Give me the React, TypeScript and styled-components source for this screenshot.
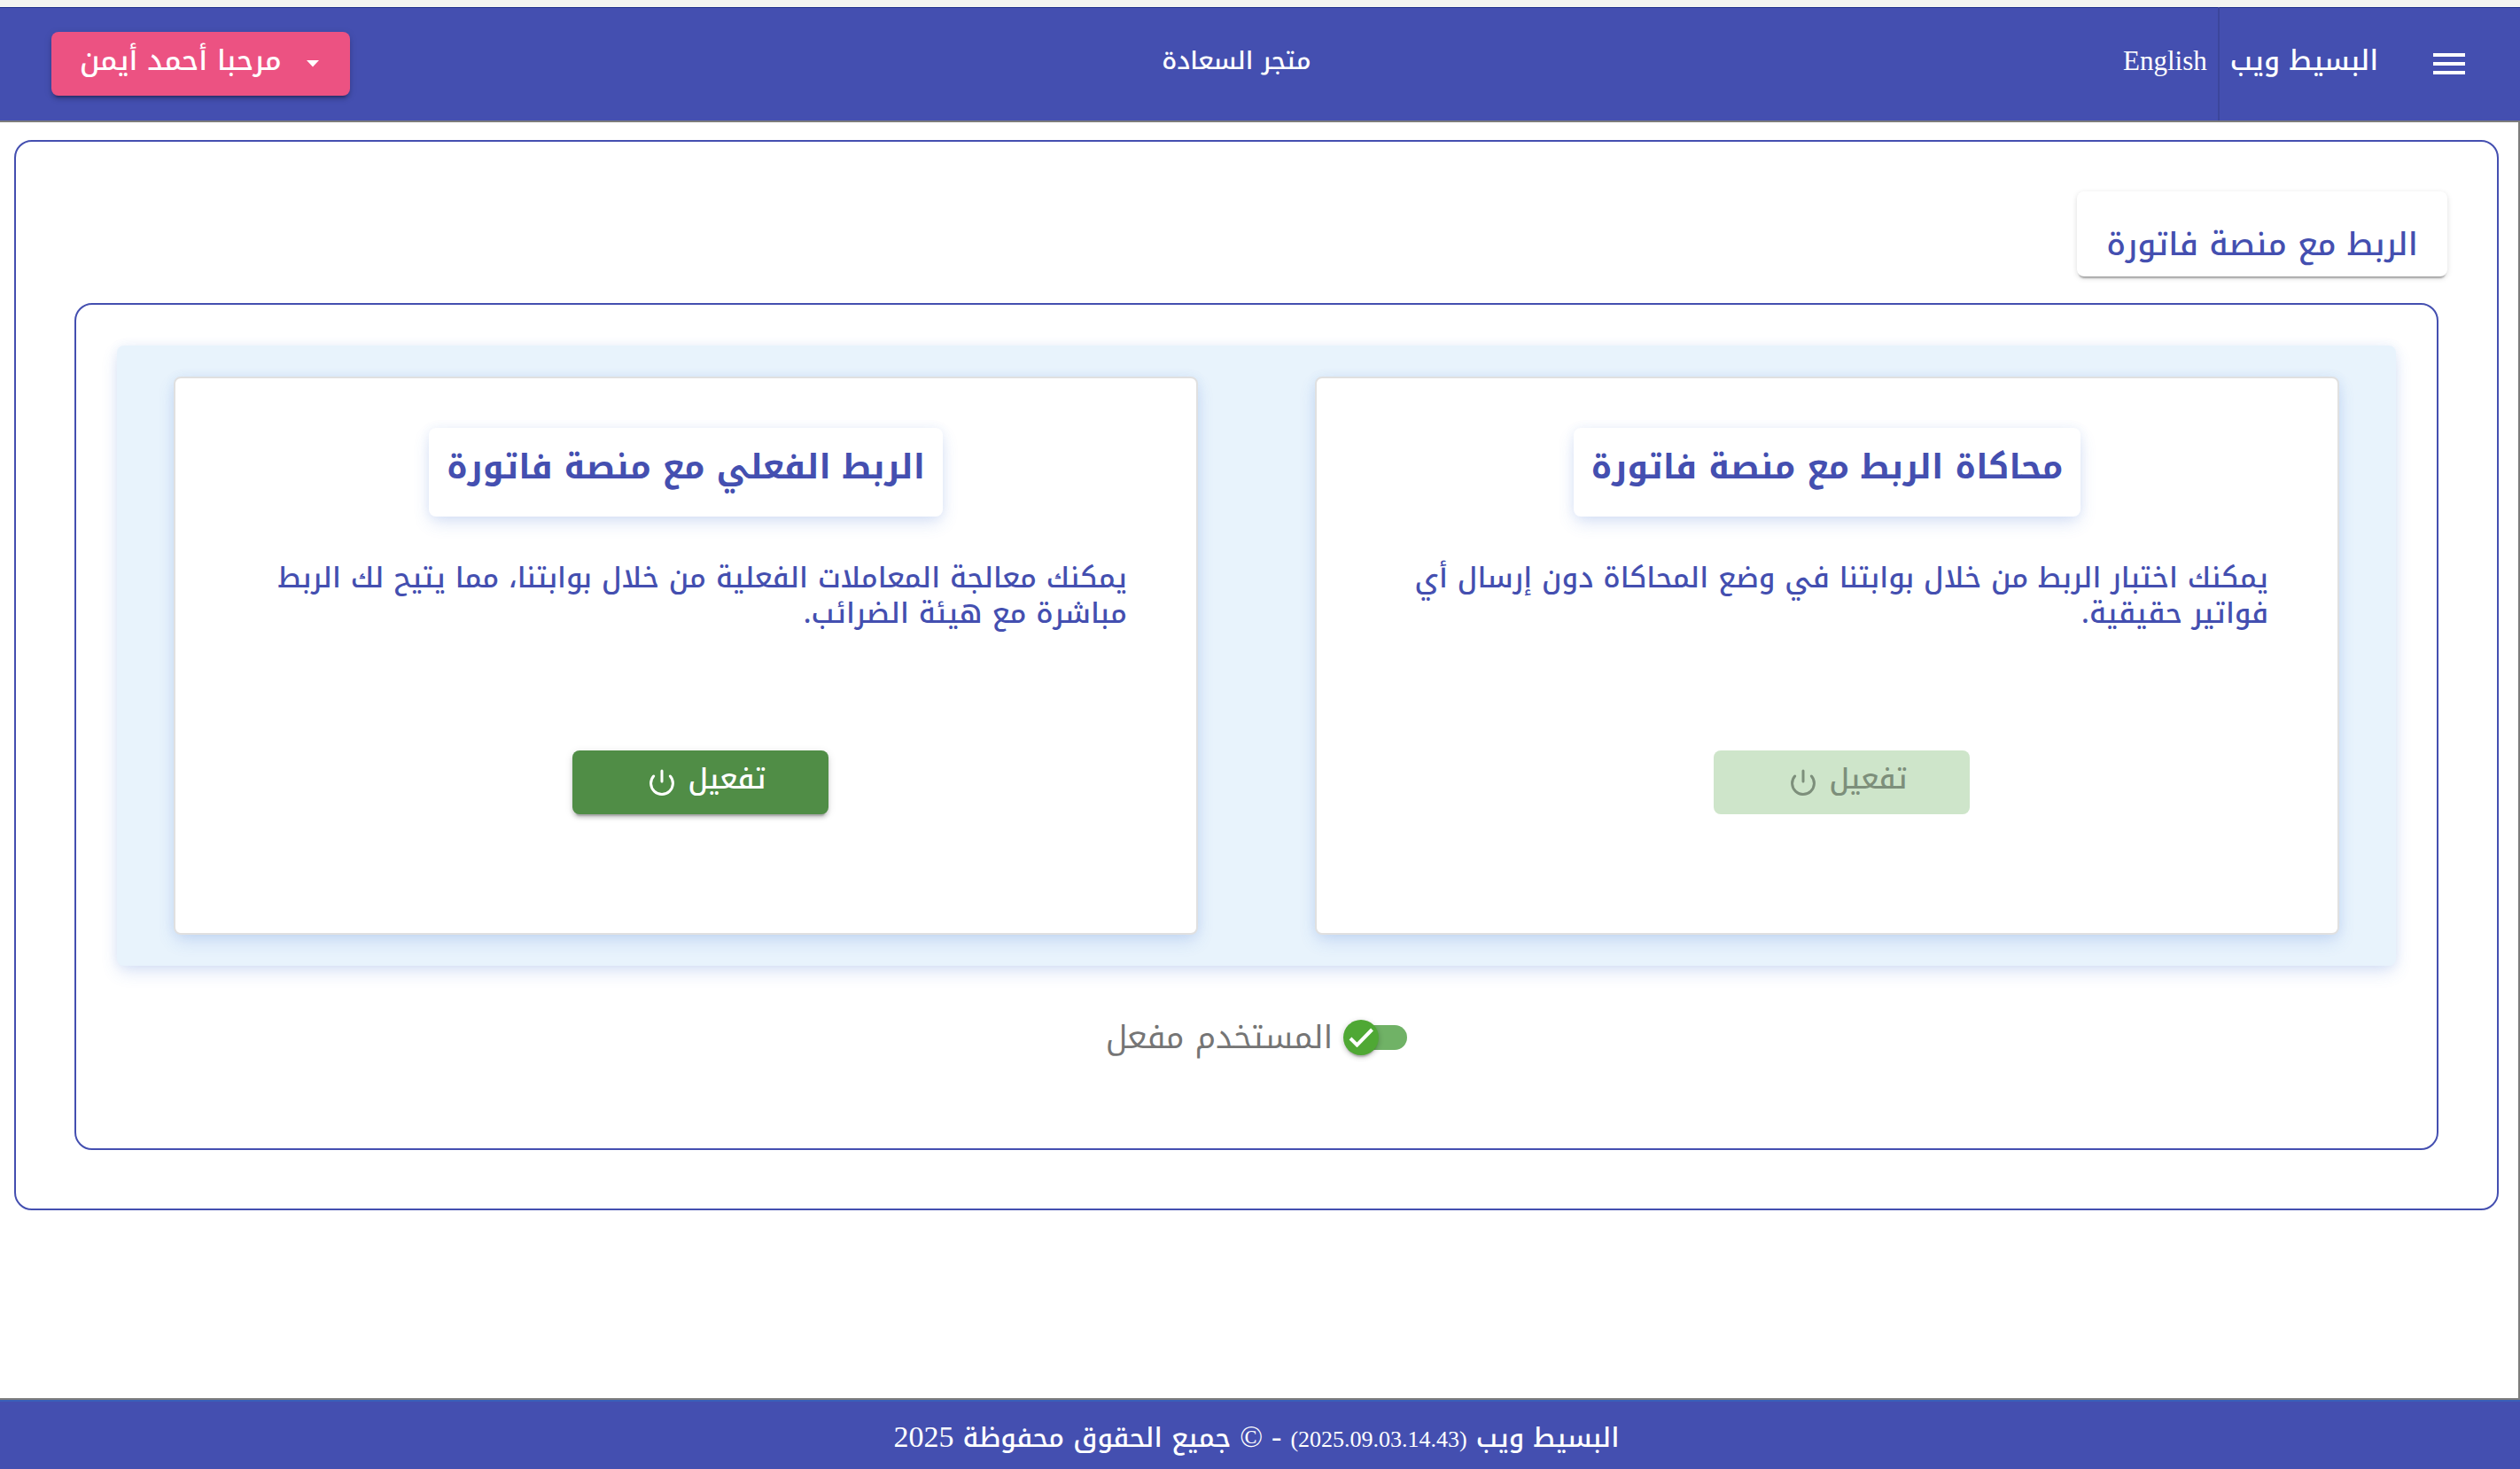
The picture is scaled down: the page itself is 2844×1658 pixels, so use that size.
import React, { useState } from "react";
import styled, { createGlobalStyle, css } from "styled-components";

const color = {
  primary: "#444fb0",
  primaryDark: "#1f2f8c",
  accent: "#ec5282",
  success: "#508d46",
  successPale: "#cee5ca",
  toggle: "#4fa834",
  toggleTrack: "#70b266",
  frame: "#7c7c7c",
  section: "#e8f3fc",
};

const arabic = `"Noto Kufi Arabic", "DejaVu Sans", sans-serif`;
const latin = `"Liberation Serif", serif`;

const GlobalStyle = createGlobalStyle`
  *, *::before, *::after { box-sizing: border-box; }
  body { margin: 0; background: #fff; font-family: ${arabic}; font-weight: 500; }
  button, input { font-family: inherit; font-weight: inherit; }
  h1, h2, p { margin: 0; }
`;

const Page = styled.div`
  display: flex;
  flex-direction: column;
  min-height: 100vh;
  border-top: 8px solid #f3f4f1;
`;

const Header = styled.header`
  display: flex;
  justify-content: space-between;
  align-items: center;
  height: 130px;
  padding: 0 62px 0 58px;
  background: ${color.primary};
  border-bottom: 2px solid ${color.frame};
  box-shadow: inset 0 1px 0 ${color.primaryDark};
  color: #fff;
`;

const BrandGroup = styled.nav`
  display: flex;
  align-self: stretch;
  align-items: center;
`;

const MenuButton = styled.button`
  display: flex;
  flex-direction: column;
  gap: 6px;
  width: 36px;
  margin-left: 62px;
  padding: 0;
  border: 0;
  background: none;
`;

const MenuBar = styled.span`
  height: 4px;
  background: #fff;
`;

const Brand = styled.a`
  display: flex;
  align-items: center;
  align-self: stretch;
  padding: 0 0 6px 12px;
  border-left: 2px solid #3c469c;
  color: inherit;
  font-size: 31px;
  line-height: 40px;
  text-decoration: none;
`;

const LanguageLink = styled.a`
  padding: 0 12px 6px 0;
  color: inherit;
  font-family: ${latin};
  font-size: 31px;
  line-height: 40px;
  text-decoration: none;
`;

const StoreName = styled.span`
  padding-bottom: 6px;
  font-size: 28px;
  line-height: 40px;
`;

const raised = css`
  box-shadow: 0 6px 2px -4px rgba(0, 0, 0, 0.2), 0 4px 4px rgba(0, 0, 0, 0.14),
    0 2px 10px rgba(0, 0, 0, 0.12);
`;

const UserButton = styled.button`
  display: flex;
  align-items: center;
  gap: 28px;
  height: 72px;
  padding: 0 35px 0 32px;
  border: 0;
  border-radius: 8px;
  background: ${color.accent};
  color: #fff;
  font-size: 32px;
  line-height: 40px;
  ${raised}
`;

const UserName = styled.span`
  padding-bottom: 6px;
`;

const Main = styled.main`
  flex: 1;
  padding: 20px 22px 20px 16px;
  border-right: 2px solid ${color.frame};
`;

const OuterPanel = styled.section`
  padding: 56px 56px 66px 66px;
  border: 2px solid ${color.primary};
  border-radius: 20px;
`;

const PageTitle = styled.h1`
  width: fit-content;
  padding: 36px 33px 12px;
  border-radius: 8px;
  color: ${color.primary};
  font-size: 36px;
  font-weight: 500;
  line-height: 48px;
  box-shadow: 0 4px 2px -2px rgba(0, 0, 0, 0.3), 0 2px 6px rgba(0, 0, 0, 0.14);
`;

const InnerPanel = styled.div`
  margin: 30px 10px 0 0;
  padding: 46px;
  border: 2px solid ${color.primary};
  border-radius: 20px;
`;

const glow = css`
  box-shadow: 0 8px 20px -2px rgba(60, 110, 210, 0.2), 0 0 12px rgba(60, 110, 210, 0.08);
`;

const Options = styled.div`
  display: grid;
  grid-template-columns: 1fr 1fr;
  gap: 132px;
  padding: 35px 64px;
  border-radius: 8px;
  background: ${color.section};
  ${glow}
`;

const Card = styled.article`
  display: flex;
  flex-direction: column;
  align-items: center;
  min-height: 630px;
  padding: 56px 78px 134px;
  border: 2px solid #e0e0e0;
  border-radius: 8px;
  background: #fff;
  color: ${color.primary};
  ${glow}
`;

const CardTitle = styled.h2`
  padding: 20px 20px 32px;
  border-radius: 8px;
  font-size: 38px;
  font-weight: 700;
  line-height: 48px;
  ${glow}
`;

const CardText = styled.p`
  align-self: stretch;
  min-height: 80px;
  margin-top: 50px;
  font-size: 32px;
  line-height: 40px;
`;

const ActivateButton = styled.button`
  display: flex;
  justify-content: center;
  align-items: center;
  gap: 16px;
  width: 289px;
  height: 72px;
  margin: auto 0 0 33px;
  padding: 0 0 0 16px;
  border: 0;
  border-radius: 8px;
  background: ${color.success};
  color: #fff;
  font-size: 32px;
  line-height: 40px;
  ${raised}

  &:disabled {
    background: ${color.successPale};
    color: #7d8f7b;
    box-shadow: none;
  }
`;

const ButtonLabel = styled.span`
  padding-bottom: 6px;
`;

const ToggleRow = styled.label`
  display: flex;
  justify-content: center;
  align-items: center;
  gap: 12px;
  margin: 57px 0 55px;
  color: #757575;
  font-size: 36px;
  font-weight: 400;
  line-height: 48px;
`;

const Switch = styled.span`
  position: relative;
  display: flex;
  justify-content: flex-end;
  width: 72px;
  height: 28px;
`;

const SwitchInput = styled.input`
  appearance: none;
  width: 68px;
  height: 28px;
  margin: 0;
  border-radius: 14px;
  background: #9e9e9e;

  &:checked {
    background: ${color.toggleTrack};
  }
`;

const Thumb = styled.span<{ $on: boolean }>`
  position: absolute;
  top: -6px;
  left: ${(p) => (p.$on ? 0 : 32)}px;
  display: grid;
  place-items: center;
  width: 40px;
  height: 40px;
  border-radius: 50%;
  background: ${(p) => (p.$on ? color.toggle : "#fafafa")};
  pointer-events: none;
  box-shadow: 0 4px 2px -2px rgba(0, 0, 0, 0.2), 0 2px 6px rgba(0, 0, 0, 0.24);
`;

const Footer = styled.footer`
  display: flex;
  justify-content: center;
  align-items: baseline;
  gap: 10px;
  padding: 20px 8px 13px 0;
  border-top: 2px solid #3a5fb8;
  background: ${color.primary};
  color: #fff;
  font-size: 30px;
  line-height: 40px;
  box-shadow: 0 -2px 0 ${color.frame};
`;

const FooterLatin = styled.span<{ $small?: boolean }>`
  font-family: ${latin};
  font-size: ${(p) => (p.$small ? 26 : 34)}px;
  line-height: 40px;
`;

const PowerIcon = () => (
  <svg width="28" height="30" viewBox="0 0 28 30" fill="none" stroke="currentColor" strokeWidth="3" strokeLinecap="round" aria-hidden="true">
    <path d="M14 2v12" />
    <path d="M4.600 8A12.400 12.400 0 1 0 23.400 8" />
  </svg>
);

type Option = { title: string; text: string; disabled: boolean };

const options: Option[] = [
  {
    title: "محاكاة الربط مع منصة فاتورة",
    text: "يمكنك اختبار الربط من خلال بوابتنا في وضع المحاكاة دون إرسال أي فواتير حقيقية.",
    disabled: true,
  },
  {
    title: "الربط الفعلي مع منصة فاتورة",
    text: "يمكنك معالجة المعاملات الفعلية من خلال بوابتنا، مما يتيح لك الربط مباشرة مع هيئة الضرائب.",
    disabled: false,
  },
];

export default function App() {
  const [enabled, setEnabled] = useState(true);

  return (
    <Page dir="rtl" lang="ar">
      <GlobalStyle />
      <Header>
        <BrandGroup>
          <MenuButton type="button" aria-label="القائمة">
            <MenuBar />
            <MenuBar />
            <MenuBar />
          </MenuButton>
          <Brand href="#">البسيط ويب</Brand>
          <LanguageLink href="#en" lang="en">English</LanguageLink>
        </BrandGroup>
        <StoreName>متجر السعادة</StoreName>
        <UserButton type="button">
          <svg width="14" height="8" viewBox="0 0 14 8" fill="currentColor" aria-hidden="true">
            <path d="M0 0h14L7 7.500z" />
          </svg>
          <UserName>مرحبا أحمد أيمن</UserName>
        </UserButton>
      </Header>

      <Main>
        <OuterPanel>
          <PageTitle>الربط مع منصة فاتورة</PageTitle>
          <InnerPanel>
            <Options>
              {options.map((option) => (
                <Card key={option.title}>
                  <CardTitle>{option.title}</CardTitle>
                  <CardText>{option.text}</CardText>
                  <ActivateButton type="button" disabled={option.disabled}>
                    <ButtonLabel>تفعيل</ButtonLabel>
                    <PowerIcon />
                  </ActivateButton>
                </Card>
              ))}
            </Options>
            <ToggleRow htmlFor="user-enabled">
              <Switch dir="ltr">
                <SwitchInput
                  id="user-enabled"
                  type="checkbox"
                  checked={enabled}
                  onChange={(e) => setEnabled(e.target.checked)}
                />
                <Thumb $on={enabled}>
                  <svg width="28" height="22" viewBox="0 0 28 22" fill="none" stroke="#fff" strokeWidth="4" aria-hidden="true">
                    <path d="M2 12l7.500 7.500L26.500 2" />
                  </svg>
                </Thumb>
              </Switch>
              <span>المستخدم مفعل</span>
            </ToggleRow>
          </InnerPanel>
        </OuterPanel>
      </Main>

      <Footer>
        <span>البسيط ويب</span>
        <FooterLatin $small dir="ltr">(2025.09.03.14.43)</FooterLatin>
        <FooterLatin>-</FooterLatin>
        <FooterLatin>©</FooterLatin>
        <span>جميع الحقوق محفوظة</span>
        <FooterLatin>2025</FooterLatin>
      </Footer>
    </Page>
  );
}
